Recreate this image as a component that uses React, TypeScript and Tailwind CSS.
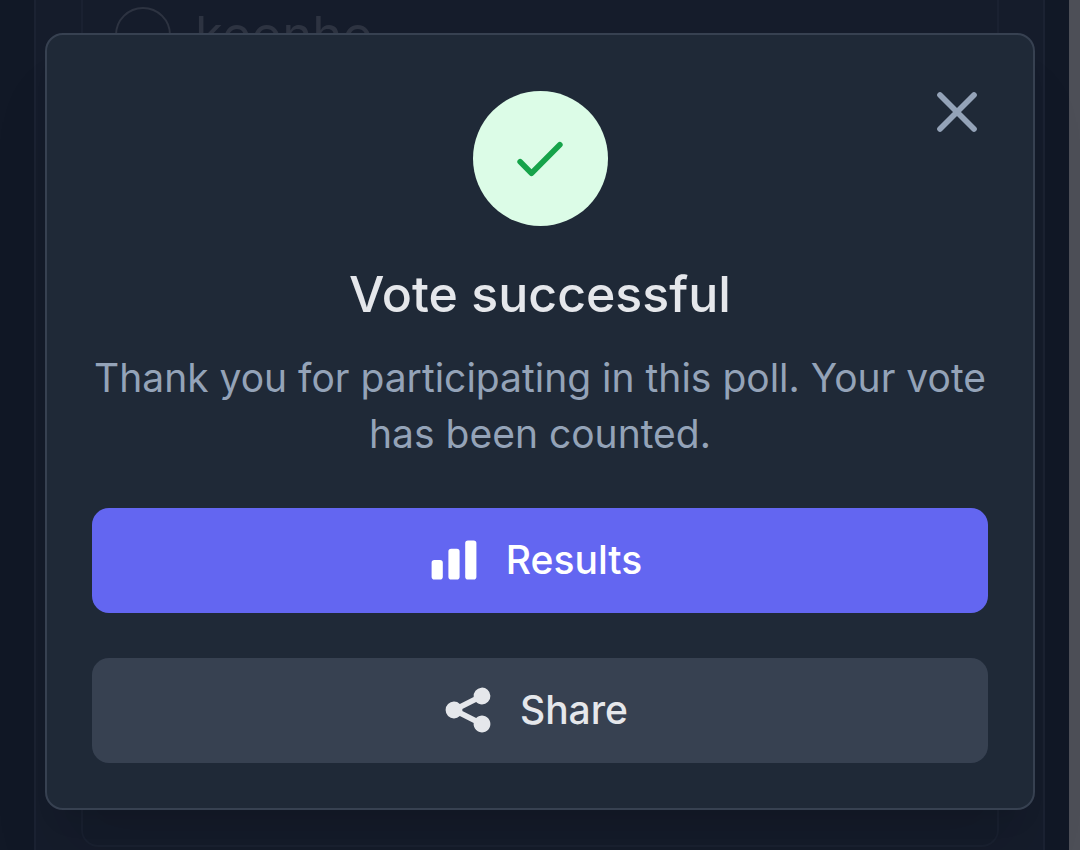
import React from "react";

function PollBackdrop() {
  return (
    <div aria-hidden="true" className="min-h-screen border-r-[11px] border-[#4d4f57] bg-[#111826] pr-6 pl-[34px]">
      <div className="min-h-screen border-x-2 border-[#1b2232] bg-[#151c2b] pr-11 pl-[45px]">
        <div className="flex h-[847px] items-start gap-6 rounded-b-[17px] border-x-2 border-b-2 border-[#1a2131] px-8 pt-[7px]">
          <span className="h-14 w-14 shrink-0 rounded-full border-2 border-[#2d3341]" />
          <span className="text-[51px] leading-14 text-[#2d3341]">keonho</span>
        </div>
      </div>
    </div>
  );
}

function BarsIcon() {
  return (
    <svg aria-hidden="true" viewBox="0 0 20 20" fill="currentColor" className="-ml-3 h-14 w-14">
      <path d="M2 11a1 1 0 011-1h2a1 1 0 011 1v5a1 1 0 01-1 1H3a1 1 0 01-1-1v-5zM8 7a1 1 0 011-1h2a1 1 0 011 1v9a1 1 0 01-1 1H9a1 1 0 01-1-1V7zM14 4a1 1 0 011-1h2a1 1 0 011 1v12a1 1 0 01-1 1h-2a1 1 0 01-1-1V4z" />
    </svg>
  );
}

function ShareIcon() {
  return (
    <svg aria-hidden="true" viewBox="0 0 20 20" fill="currentColor" className="-ml-3 h-14 w-14">
      <path d="M15 8a3 3 0 10-2.977-2.63l-4.94 2.47a3 3 0 100 4.319l4.94 2.47a3 3 0 10.895-1.789l-4.94-2.47a3.027 3.027 0 000-.74l4.94-2.47C13.456 7.68 14.19 8 15 8z" />
    </svg>
  );
}

export default function App() {
  return (
    <div className="relative h-screen overflow-hidden bg-[#111826] font-['Inter',sans-serif]">
      <PollBackdrop />
      <div className="absolute inset-0 px-[45px] pt-[33px]">
        <section
          role="dialog"
          aria-modal="true"
          aria-labelledby="vote-title"
          className="relative flex flex-col items-center rounded-[18px] border-2 border-[#374151] bg-[#1f2937] px-[45px] pt-14 pb-[45px] text-center shadow-[0_56px_70px_-14px_rgb(0_0_0/0.1),0_22px_28px_-17px_rgb(0_0_0/0.1)]"
        >
          <button type="button" aria-label="Close" className="absolute top-[43px] right-[42px] text-[#94a3b8]">
            <svg aria-hidden="true" viewBox="0 0 24 24" fill="none" stroke="currentColor" strokeWidth="2" strokeLinecap="round" strokeLinejoin="round" className="h-17 w-17">
              <path d="M6 18L18 6M6 6l12 12" />
            </svg>
          </button>
          <div className="flex h-[135px] w-[135px] items-center justify-center rounded-full bg-[#dcfce7] text-[#16a34a]">
            <svg aria-hidden="true" viewBox="0 0 24 24" fill="none" stroke="currentColor" strokeWidth="2" strokeLinecap="round" strokeLinejoin="round" className="h-17 w-17">
              <path d="M5 13l4 4L19 7" />
            </svg>
          </div>
          <h1 id="vote-title" className="mt-[34px] text-[50px] leading-17 font-medium text-[#e5e7eb]">
            Vote successful
          </h1>
          <p className="mt-[22px] text-[39px] leading-14 text-[#94a3b8]">
            Thank you for participating in this poll. Your vote has been counted.
          </p>
          <div className="mt-[46px] flex w-full flex-col gap-[45px] text-[39px] leading-14 font-medium">
            <button type="button" className="flex items-center justify-center gap-6 rounded-[17px] bg-[#6366f1] pt-6 pb-[25px] text-white">
              <BarsIcon />
              Results
            </button>
            <button type="button" className="flex items-center justify-center gap-6 rounded-[17px] bg-[#374151] pt-6 pb-[25px] text-[#e5e7eb]">
              <ShareIcon />
              Share
            </button>
          </div>
        </section>
      </div>
    </div>
  );
}
